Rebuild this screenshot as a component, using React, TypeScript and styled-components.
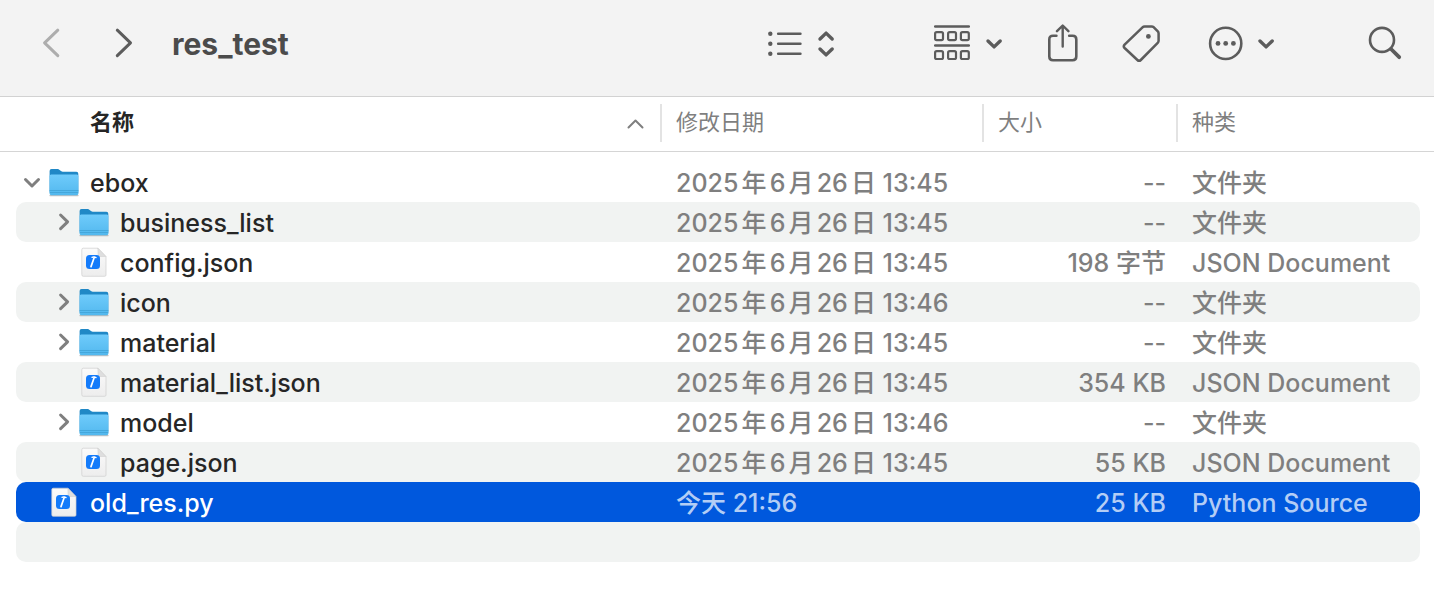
import React from "react";
import styled, { createGlobalStyle, css } from "styled-components";

const GlobalStyle = createGlobalStyle`
  * { box-sizing: border-box; }
  body {
    margin: 0;
    background: #ffffff;
    font-family: Inter, "Noto Sans CJK SC", sans-serif;
    -webkit-font-smoothing: antialiased;
  }
`;

const columns = "minmax(0, 1fr) 322px 194px 244px";

const Toolbar = styled.header`
  display: flex;
  align-items: center;
  height: 97px;
  padding: 0 30px 8px 41px;
  background: #f3f3f3;
  border-bottom: 1px solid #d2d2d2;
`;

const NavButtons = styled.nav`
  display: flex;
  gap: 52px;
`;

const Title = styled.h1`
  flex: 1;
  margin: 0 0 0 39px;
  font-size: 30px;
  line-height: 40px;
  font-weight: 700;
  color: #4b4b4b;
`;

const ToolButton = styled.button<{ $muted?: boolean }>`
  display: flex;
  align-items: center;
  gap: 12px;
  padding: 0;
  border: 0;
  background: none;
  color: ${(p) => (p.$muted ? "#adadad" : "#5c5c5c")};
`;

const Tools = styled.div`
  display: flex;
  align-items: center;
  gap: 90px;
`;

const Actions = styled.div`
  display: flex;
  align-items: center;
  gap: 42px;
`;

const Glyph = styled.svg`
  display: block;
  flex: none;
  fill: none;
  stroke: currentColor;
  stroke-linecap: round;
  stroke-linejoin: round;
`;

const FileTable = styled.table`
  display: block;
  width: 100%;
`;

const Head = styled.thead`
  display: block;
  height: 55px;
  padding: 7px 14px 0 16px;
  border-bottom: 1px solid #d5d5d5;
`;

const HeadRow = styled.tr`
  display: grid;
  grid-template-columns: ${columns};
`;

const HeadCell = styled.th<{ $sorted?: boolean }>`
  display: flex;
  justify-content: space-between;
  align-items: center;
  height: 38px;
  padding: 0 14px 2px;
  border-left: 2px solid #e3e3e3;
  text-align: left;
  font-size: 22px;
  line-height: 32px;
  font-weight: 400;
  color: #7f7f7f;
  ${(p) =>
    p.$sorted &&
    css`
      padding-left: 72px;
      border-left-color: transparent;
      font-weight: 700;
      color: #262626;
    `}
`;

const SortArrow = styled.span`
  color: #7f7f7f;
`;

const Body = styled.tbody`
  display: block;
  padding: 10px 14px 0 16px;
`;

const Row = styled.tr<{ $selected: boolean }>`
  display: grid;
  grid-template-columns: ${columns};
  height: 40px;
  border-radius: 10px;
  font-size: 25px;
  font-weight: 450;
  color: #7f7f7f;
  --name: #262626;
  &:nth-child(even) {
    background: #f1f3f2;
  }
  ${(p) =>
    p.$selected &&
    css`
      && {
        background: #0058dd;
      }
      color: #b3cdf5;
      --name: #ffffff;
    `}
`;

const Cell = styled.td<{ $align?: "right" }>`
  padding: 0 ${(p) => (p.$align === "right" ? "10px" : "0")} 0 16px;
  text-align: ${(p) => p.$align ?? "left"};
  line-height: 42px;
  white-space: nowrap;
  text-autospace: normal;
`;

const NameCell = styled.td<{ $level: number }>`
  display: flex;
  align-items: center;
  height: 40px;
  padding: 0 0 0 ${(p) => p.$level * 30}px;
  color: var(--name);
`;

const Disclosure = styled.button`
  width: 32px;
  height: 40px;
  padding: 0;
  border: 0;
  background: none;
  color: #7f7f7f;
`;

const DisclosureSpace = styled.span`
  width: 32px;
`;

const FileName = styled.span`
  padding: 2px 0 0 10px;
  line-height: 40px;
`;

const ChevronDown = () => (
  <Glyph width="20" height="40" strokeWidth="3.4">
    <path d="M4 17l6.100 5.900L16.200 17" />
  </Glyph>
);

const FolderIcon = () => (
  <Glyph width="32" height="40">
    <defs>
      <linearGradient id="folderFront" x1="0" y1="0" x2="0" y2="1">
        <stop offset="0" stopColor="#6fcbfb" />
        <stop offset="1" stopColor="#52b8ee" />
      </linearGradient>
    </defs>
    <path d="M2 33.600h28" stroke="#9a9a9a" strokeOpacity=".6" strokeWidth="1.400" />
    <path
      d="M1.600 9q0-1.900 1.900-1.900h6.200q1 0 1.900.8l1.400 1.200q.8.7 1.800.7h13.500q2 0 2 2V30H1.600z"
      fill="#2088c6"
      stroke="none"
    />
    <path
      d="M1.600 14.200q0-1.600 1.600-1.600h25.600q1.600 0 1.600 1.600V31.600q0 1.600-1.600 1.600H3.200q-1.600 0-1.600-1.600z"
      fill="url(#folderFront)"
      stroke="none"
    />
    <path d="M2 28.500h28M2 30.500h28" stroke="#3d9fd3" strokeWidth=".7" />
  </Glyph>
);

const SourceFileIcon = () => (
  <Glyph width="32" height="40">
    <defs>
      <linearGradient id="filePage" x1="0" y1="0" x2="0" y2="1">
        <stop offset="0" stopColor="#fbfbfb" />
        <stop offset="1" stopColor="#ededed" />
      </linearGradient>
    </defs>
    <path
      d="M3.800 7.500q0-1.300 1.300-1.300H20l8 8.300V33q0 1.300-1.300 1.300H5.100q-1.300 0-1.300-1.300z"
      fill="url(#filePage)"
      stroke="#cfcfcf"
      strokeWidth=".7"
    />
    <path d="M20 6.400l7.800 8.100h-6.500q-1.300 0-1.300-1.300z" fill="#dedede" stroke="#c4c4c4" strokeWidth=".4" />
    <rect x="8" y="13" width="14" height="14" rx="3.500" fill="#147bfa" stroke="none" />
    <path d="M16.200 15.500L13 24.600" stroke="#ffffff" strokeWidth="1.700" />
    <path d="M14 15.300q2.200-.9 4 .3" stroke="#ffffff" strokeWidth="1.400" />
  </Glyph>
);

type Entry = {
  name: string;
  level: number;
  type: "folder" | "file";
  open?: boolean;
  date: string;
  size: string;
  kind: string;
  selected?: boolean;
};

const entries: Entry[] = [
  { name: "ebox", level: 0, type: "folder", open: true, date: "2025年6月26日 13:45", size: "--", kind: "文件夹" },
  { name: "business_list", level: 1, type: "folder", date: "2025年6月26日 13:45", size: "--", kind: "文件夹" },
  { name: "config.json", level: 1, type: "file", date: "2025年6月26日 13:45", size: "198 字节", kind: "JSON Document" },
  { name: "icon", level: 1, type: "folder", date: "2025年6月26日 13:46", size: "--", kind: "文件夹" },
  { name: "material", level: 1, type: "folder", date: "2025年6月26日 13:45", size: "--", kind: "文件夹" },
  { name: "material_list.json", level: 1, type: "file", date: "2025年6月26日 13:45", size: "354 KB", kind: "JSON Document" },
  { name: "model", level: 1, type: "folder", date: "2025年6月26日 13:46", size: "--", kind: "文件夹" },
  { name: "page.json", level: 1, type: "file", date: "2025年6月26日 13:45", size: "55 KB", kind: "JSON Document" },
  { name: "old_res.py", level: 0, type: "file", date: "今天 21:56", size: "25 KB", kind: "Python Source", selected: true },
];

const EntryRow = ({ entry }: { entry: Entry }) => (
  <Row $selected={!!entry.selected}>
    <NameCell $level={entry.level}>
      {entry.type === "folder" ? (
        <Disclosure aria-label={entry.name} aria-expanded={!!entry.open}>
          <Glyph width="32" height="40" strokeWidth="3">
            <path d={entry.open ? "M9.500 17.500l6.500 6.500 6.500-6.500" : "M14.600 13l7 6.800-7 6.800"} />
          </Glyph>
        </Disclosure>
      ) : (
        <DisclosureSpace />
      )}
      {entry.type === "folder" ? <FolderIcon /> : <SourceFileIcon />}
      <FileName>{entry.name}</FileName>
    </NameCell>
    <Cell>{entry.date}</Cell>
    <Cell $align="right">{entry.size}</Cell>
    <Cell>{entry.kind}</Cell>
  </Row>
);

export default function App() {
  return (
    <>
      <GlobalStyle />
      <Toolbar>
        <NavButtons>
          <ToolButton $muted aria-label="后退">
            <Glyph width="20" height="40" strokeWidth="3">
              <path d="M16.800 6.200L3.600 18.900l13.200 12.700" />
            </Glyph>
          </ToolButton>
          <ToolButton aria-label="前进">
            <Glyph width="20" height="40" strokeWidth="3">
              <path d="M4.300 6.200l13.200 12.700L4.300 31.600" />
            </Glyph>
          </ToolButton>
        </NavButtons>
        <Title>res_test</Title>
        <Tools>
          <ToolButton aria-label="列表显示">
            <Glyph width="38" height="40" strokeWidth="2.600">
              <path d="M12.200 9.700h22.200M12.200 19.700h22.200M12.200 29.700h22.200" />
              <g fill="currentColor" stroke="none">
                <circle cx="4.300" cy="9.700" r="2.200" />
                <circle cx="4.300" cy="19.700" r="2.200" />
                <circle cx="4.300" cy="29.700" r="2.200" />
              </g>
            </Glyph>
            <Glyph width="26" height="40" strokeWidth="3.400">
              <path d="M4 15l6.100-5.900 6.100 5.900M4 25l6.100 5.900 6.100-5.900" />
            </Glyph>
          </ToolButton>
          <Actions>
            <ToolButton aria-label="分组">
              <Glyph width="40" height="40" strokeWidth="2.200">
                <path d="M3.200 2.500h33.600M3.200 21.400h33.600" strokeWidth="2.500" />
                {[8.2, 27.1].map((y) =>
                  [3.1, 16.1, 28.9].map((x) => (
                    <rect key={`${x}-${y}`} x={x} y={y} width="7.900" height="7.900" rx="1.600" />
                  ))
                )}
              </Glyph>
              <ChevronDown />
            </ToolButton>
            <ToolButton aria-label="共享">
              <Glyph width="34" height="40" strokeWidth="2.600">
                <path d="M10.400 11.700H7q-3.700 0-3.700 3.700v17.200q0 3.700 3.700 3.700h19.600q3.700 0 3.700-3.700V15.400q0-3.700-3.700-3.700h-3.400" />
                <path d="M16.700 22.600V1.800M11 7.200l5.700-5.700 5.700 5.700" strokeWidth="2.400" />
              </Glyph>
            </ToolButton>
            <ToolButton aria-label="标签">
              <Glyph width="38" height="40" strokeWidth="2.500">
                <path d="M22.600 2.400h7q1.200 0 2 .8l4.200 4.200q.8.800.8 2v7.400q0 1.200-.9 2.100L18.800 36q-1.700 1.700-3.400 0L2.600 24q-1.600-1.600 0-3.300L20.500 3.300q.9-.9 2.100-.9z" />
                <circle cx="26.400" cy="12.400" r="2.400" fill="currentColor" stroke="none" />
              </Glyph>
            </ToolButton>
            <ToolButton aria-label="更多">
              <Glyph width="42" height="40" strokeWidth="2.600">
                <circle cx="23.700" cy="19.400" r="15.600" />
                <g fill="currentColor" stroke="none">
                  <circle cx="16" cy="19.400" r="2.400" />
                  <circle cx="23.700" cy="19.400" r="2.400" />
                  <circle cx="31.400" cy="19.400" r="2.400" />
                </g>
              </Glyph>
              <ChevronDown />
            </ToolButton>
          </Actions>
          <ToolButton aria-label="搜索">
            <Glyph width="38" height="40" strokeWidth="2.600">
              <circle cx="16" cy="15.900" r="12" />
              <path d="M25 25l8.200 8.200" strokeWidth="3.800" />
            </Glyph>
          </ToolButton>
        </Tools>
      </Toolbar>
      <FileTable>
        <Head>
          <HeadRow>
            <HeadCell $sorted aria-sort="ascending">
              名称
              <SortArrow>
                <Glyph width="22" height="36" strokeWidth="2">
                  <path d="M4.500 23.500l7-7 7 7" />
                </Glyph>
              </SortArrow>
            </HeadCell>
            <HeadCell>修改日期</HeadCell>
            <HeadCell>大小</HeadCell>
            <HeadCell>种类</HeadCell>
          </HeadRow>
        </Head>
        <Body>
          {entries.map((entry) => (
            <EntryRow key={entry.name} entry={entry} />
          ))}
          <Row $selected={false} aria-hidden="true" />
        </Body>
      </FileTable>
    </>
  );
}
